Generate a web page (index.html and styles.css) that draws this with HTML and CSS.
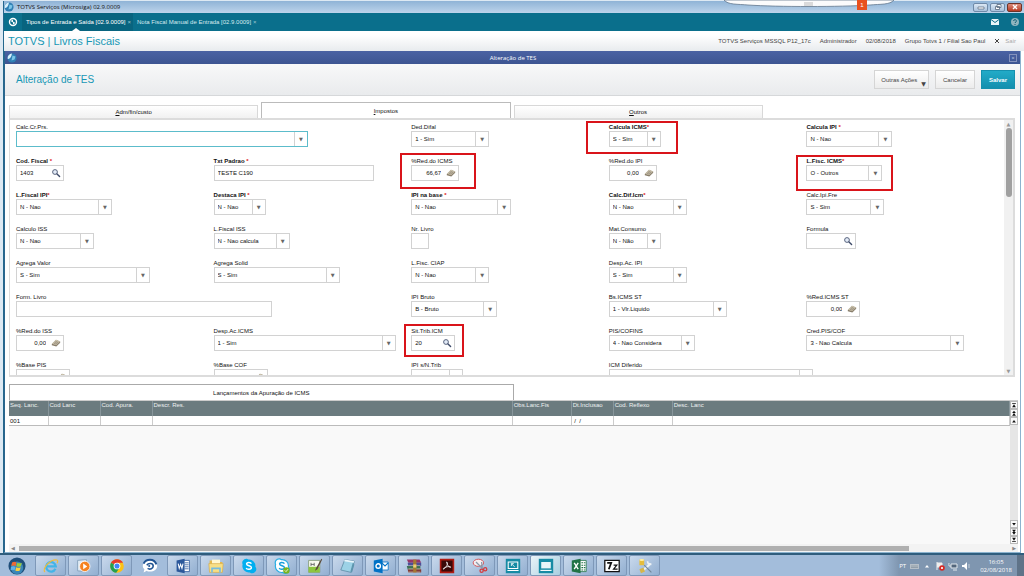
FILE: index.html
```html
<!DOCTYPE html>
<html lang="pt-BR">
<head>
    <meta charset="UTF-8">
    <meta name="viewport" content="width=device-width, initial-scale=1.0">
    <title>TOTVS Serviços (Microsiga) 02.9.0009</title>
    <link rel="stylesheet" href="styles.css">
</head>
<body>
    <svg class="symbols" width="0" height="0">
        <symbol id="search" viewBox="0 0 10 10">
            <circle cx="4" cy="4" r="2.4" fill="#e4ecf8" stroke="#4a5672" stroke-width=".9"/>
            <path d="M6 6l2.600 2.600" stroke="#3d4a68" stroke-width="1.400" stroke-linecap="round"/>
        </symbol>
        <symbol id="calc" viewBox="0 0 12 10">
            <path d="M1 6.200L6 1.200l5 1.900v1.700L6.400 9.200 1 7.600z" fill="#857b68"/>
            <path d="M1 6L6 1.200l5 1.900L6.200 7.600z" fill="#cfc6b0"/>
            <path d="M5 3l4 1.400M4 4.200l4 1.400M3 5.200l3.600 1.300M7.500 2.600L4 6.200M9 3.200L5.600 6.800" stroke="#857c6c" stroke-width=".5"/>
        </symbol>
        <symbol id="orb" viewBox="0 0 10 10">
            <circle cx="5" cy="5" r="4.600" fill="#2f7fb4"/>
            <path d="M5 .6A4.400 4.400 0 0 0 .8 6C2.500 6.500 4.500 4.500 5 .6z" fill="#d9f0fa"/>
            <path d="M5.500 2.500l3 1-1 3-3 1z" fill="#7cc6e8"/>
        </symbol>
    </svg>

    <div class="window">
        <header class="titlebar">
            <svg class="logo"><use href="#orb"/></svg>
            <span class="caption">TOTVS Serviços (Microsiga) 02.9.0009</span>
            <div class="window-buttons">
                <button aria-label="Minimizar"><svg viewBox="0 0 8 6"><path d="M1 3h6v2H1z" fill="#fff" stroke="#56677c" stroke-width=".7"/></svg></button>
                <button aria-label="Restaurar"><svg viewBox="0 0 8 6"><path d="M3 .5h4v3H3zM1.500 2.500h4v3h-4z" fill="#fff" stroke="#56677c" stroke-width=".8"/></svg></button>
                <button class="close" aria-label="Fechar"><svg viewBox="0 0 8 6"><path d="M2 1l4 4M6 1L2 5" stroke="#fff" stroke-width="1.400"/></svg></button>
            </div>
            <div class="remote-bar">
                <svg viewBox="0 0 170 8" preserveAspectRatio="none"><path d="M0 0h170c-4 5-14 4-24 5-30 2-92 2-122 0C14 4 4 5 0 0z" fill="#fbfbfc" stroke="#64788e" stroke-width=".8"/><path d="M80 3h9M80 5h9" stroke="#aaa" stroke-width=".8"/></svg>
                <span class="badge">1</span>
            </div>
        </header>

        <nav class="app-tabs">
            <button class="refresh" aria-label="Atualizar"><svg viewBox="0 0 10 10"><circle cx="5" cy="5" r="3.500" fill="none" stroke="#fff" stroke-width="1.400"/><path d="M2.500 4L5 2.500v3zM7.500 6L5 7.500v-3z" fill="#fff"/></svg></button>
            <a href="#" class="app-tab current">Tipos de Entrada e Saída [02.9.0009] <span>×</span></a>
            <a href="#" class="app-tab">Nota Fiscal Manual de Entrada [02.9.0009] <span>×</span></a>
            <div class="app-icons">
                <button aria-label="Mensagens"><svg viewBox="0 0 10 10"><path d="M1 2h8v6H1z" fill="#e8f4f7"/><path d="M1 2.500l4 3 4-3" fill="none" stroke="#0a6d8a"/></svg></button>
                <button aria-label="Ajuda"><svg viewBox="0 0 10 10"><circle cx="5" cy="5" r="4" fill="#8fb4be"/><path d="M3.700 4a1.300 1.300 0 1 1 2 1L5 6M5 7v1" fill="none" stroke="#0a5d75"/></svg></button>
            </div>
        </nav>

        <div class="module-bar">
            <h1>TOTVS | Livros Fiscais</h1>
            <div class="session">
                <span>TOTVS Serviços MSSQL P12_17c</span>
                <span>Administrador</span>
                <span>02/08/2018</span>
                <span>Grupo Totvs 1 / Filial Sao Paul</span>
                <button class="exit"><svg viewBox="0 0 6 6"><path d="M1 1l4 4M5 1L1 5" stroke="#444"/></svg>Sair</button>
            </div>
        </div>

        <main class="dialog">
            <div class="dialog-title">
                <svg class="logo"><use href="#orb"/></svg>
                <span>Alteração de TES</span>
                <button aria-label="Fechar janela">×</button>
            </div>
            <div class="dialog-head">
                <h2>Alteração de TES</h2>
                <button class="btn menu">Outras Ações</button>
                <button class="btn">Cancelar</button>
                <button class="btn primary">Salvar</button>
            </div>

            <div class="content">
                <div class="tabs">
                    <button class="tab"><u>A</u>dm/fin/custo</button>
                    <button class="tab active"><u>I</u>mpostos</button>
                    <button class="tab"><u>O</u>utros</button>
                </div>

                <section class="panel">
                    <form class="fields">
                        <div class="field span2"><label for="crprs">Calc.Cr.Prs.</label><div class="combo w-292 focus"><select id="crprs"><option></option></select></div></div>
                        <div class="field"><label for="difal">Ded.Difal</label><div class="combo w-78"><select id="difal"><option>1 - Sim</option></select></div></div>
                        <div class="field"><label for="cicms" class="req">Calcula ICMS<i>*</i></label><div class="combo w-52"><select id="cicms"><option>S - Sim</option></select></div><span class="mark mark-cicms"></span></div>
                        <div class="field"><label for="cipi" class="req">Calcula IPI <i>*</i></label><div class="combo w-86"><select id="cipi"><option>N - Nao</option></select></div></div>

                        <div class="field"><label for="cfis" class="req">Cod. Fiscal <i>*</i></label><div class="box w-48"><input id="cfis" value="1403"><svg><use href="#search"/></svg></div></div>
                        <div class="field"><label for="txt" class="req">Txt Padrao <i>*</i></label><div class="box w-160"><input id="txt" value="TESTE C190"></div></div>
                        <div class="field"><label for="ricms">%Red.do ICMS</label><div class="box num w-48"><input id="ricms" value="66,67"><svg><use href="#calc"/></svg></div><span class="mark mark-ricms"></span></div>
                        <div class="field"><label for="ripi">%Red.do IPI</label><div class="box num w-48"><input id="ripi" value="0,00"><svg><use href="#calc"/></svg></div></div>
                        <div class="field"><label for="lficms" class="req">L.Fisc. ICMS<i>*</i></label><div class="combo w-76"><select id="lficms"><option>O - Outros</option></select></div><span class="mark mark-lficms"></span></div>

                        <div class="field"><label for="lfipi" class="req">L.Fiscal IPI<i>*</i></label><div class="combo w-96"><select id="lfipi"><option>N - Nao</option></select></div></div>
                        <div class="field"><label for="dipi" class="req">Destaca IPI <i>*</i></label><div class="combo w-52"><select id="dipi"><option>N - Nao</option></select></div></div>
                        <div class="field"><label for="ipib" class="req">IPI na base <i>*</i></label><div class="combo w-100"><select id="ipib"><option>N - Nao</option></select></div></div>
                        <div class="field"><label for="cdif" class="req">Calc.Dif.Icm<i>*</i></label><div class="combo w-78"><select id="cdif"><option>N - Nao</option></select></div></div>
                        <div class="field"><label for="ipif">Calc.Ipi.Fre</label><div class="combo w-78"><select id="ipif"><option>S - Sim</option></select></div></div>

                        <div class="field"><label for="ciss">Calculo ISS</label><div class="combo w-78"><select id="ciss"><option>N - Nao</option></select></div></div>
                        <div class="field"><label for="lfiss">L.Fiscal ISS</label><div class="combo w-76"><select id="lfiss"><option>N - Nao calcula</option></select></div></div>
                        <div class="field"><label for="nrl">Nr. Livro</label><div class="box w-18"><input id="nrl"></div></div>
                        <div class="field"><label for="mat">Mat.Consumo</label><div class="combo w-52"><select id="mat"><option>N - Não</option></select></div></div>
                        <div class="field"><label for="form">Formula</label><div class="box w-50"><input id="form"><svg><use href="#search"/></svg></div></div>

                        <div class="field"><label for="agv">Agrega Valor</label><div class="combo w-134"><select id="agv"><option>S - Sim</option></select></div></div>
                        <div class="field"><label for="ags">Agrega Solid</label><div class="combo w-126"><select id="ags"><option>S - Sim</option></select></div></div>
                        <div class="field"><label for="ciap">L.Fisc. CIAP</label><div class="combo w-78"><select id="ciap"><option>N - Nao</option></select></div></div>
                        <div class="field span2"><label for="daipi">Desp.Ac. IPI</label><div class="combo w-78"><select id="daipi"><option>S - Sim</option></select></div></div>

                        <div class="field span2"><label for="fliv">Form. Livro</label><div class="box w-256"><input id="fliv"></div></div>
                        <div class="field"><label for="bruto">IPI Bruto</label><div class="combo w-86"><select id="bruto"><option>B - Bruto</option></select></div></div>
                        <div class="field"><label for="bsst">Bs.ICMS ST</label><div class="combo w-118"><select id="bsst"><option>1 - Vlr.Liquido</option></select></div></div>
                        <div class="field"><label for="rst">%Red.ICMS ST</label><div class="box num w-54"><input id="rst" value="0,00"><svg><use href="#calc"/></svg></div></div>

                        <div class="field"><label for="riss">%Red.do ISS</label><div class="box num w-48"><input id="riss" value="0,00"><svg><use href="#calc"/></svg></div></div>
                        <div class="field"><label for="daicms">Desp.Ac.ICMS</label><div class="combo w-182"><select id="daicms"><option>1 - Sim</option></select></div></div>
                        <div class="field"><label for="sit">Sit.Trib.ICM</label><div class="box w-44"><input id="sit" value="20"><svg><use href="#search"/></svg></div><span class="mark mark-sit"></span></div>
                        <div class="field"><label for="pis">PIS/COFINS</label><div class="combo w-86"><select id="pis"><option>4 - Nao Considera</option></select></div></div>
                        <div class="field"><label for="cred">Cred.PIS/COF</label><div class="combo w-158"><select id="cred"><option>3 - Nao Calcula</option></select></div></div>

                        <div class="field"><label for="bpis">%Base PIS</label><div class="box num w-54"><input id="bpis"><svg><use href="#calc"/></svg></div></div>
                        <div class="field"><label for="bcof">%Base COF</label><div class="box num w-54"><input id="bcof"><svg><use href="#calc"/></svg></div></div>
                        <div class="field"><label for="ntrib">IPI s/N.Trib</label><div class="combo w-52"><select id="ntrib"><option></option></select></div></div>
                        <div class="field span2"><label for="dife">ICM Diferido</label><div class="combo w-204"><select id="dife"><option></option></select></div></div>
                    </form>
                    <div class="scroll"><span>▲</span><div class="thumb"></div><span>▼</span></div>
                </section>

                <section class="ledger">
                    <button class="ledger-tab">Lançamentos da Apuração de ICMS</button>
                    <div class="ledger-body">
                        <div class="ledger-rows">
                            <table>
                                <colgroup>
                                    <col class="c-seq"><col class="c-cod"><col class="c-cod"><col class="c-descr"><col class="c-mid"><col class="c-date"><col class="c-mid"><col>
                                </colgroup>
                                <thead>
                                    <tr><th>Seq. Lanc.</th><th>Cod Lanc</th><th>Cod. Apura.</th><th>Descr. Res.</th><th>Obs.Lanc.Fis</th><th>Dt.Inclusao</th><th>Cod. Reflexo</th><th>Desc. Lanc</th></tr>
                                </thead>
                                <tbody>
                                    <tr><td>001</td><td></td><td></td><td></td><td></td><td>&nbsp;/ &nbsp;/</td><td></td><td></td></tr>
                                </tbody>
                            </table>
                        </div>
                        <div class="pager">
                            <button aria-label="Primeiro"><svg viewBox="0 0 8 8"><path d="M1.500 1.500h5v1h-5zM1.500 7L4 3l2.500 4z" fill="#111"/></svg></button>
                            <button aria-label="Página acima"><svg viewBox="0 0 8 8"><path d="M1.500 4L4 1l2.500 3zM1.500 7.500L4 4l2.500 3.500z" fill="#111"/></svg></button>
                            <button aria-label="Acima"><svg viewBox="0 0 8 8"><path d="M1.500 6L4 2.500 6.500 6z" fill="#111"/></svg></button>
                            <div class="track"></div>
                            <button aria-label="Abaixo"><svg viewBox="0 0 8 8"><path d="M1.500 2.500L4 6l2.500-3.500z" fill="#111"/></svg></button>
                            <button aria-label="Página abaixo"><svg viewBox="0 0 8 8"><path d="M1.500 1L4 4.500 6.500 1zM1.500 4L4 7.500 6.500 4z" fill="#111"/></svg></button>
                            <button aria-label="Último"><svg viewBox="0 0 8 8"><path d="M1.500 5.500h5v1h-5zM1.500 1L4 5l2.500-4z" fill="#111"/></svg></button>
                        </div>
                    </div>
                    <div class="hscroll"><span>◀</span><div class="rail"><div class="thumb"></div></div><span>▶</span></div>
                </section>
            </div>
        </main>
    </div>

    <footer class="taskbar">
        <button class="start" aria-label="Iniciar"><svg viewBox="0 0 20 20"><circle cx="10" cy="10" r="9.500" fill="#1f4e79"/><circle cx="10" cy="12" r="7" fill="#3a87b8"/><path d="M4.500 6c2-1 3.500-.8 5 0L8.500 10c-1.500-.9-3-.9-4.800-.1z" fill="#ee6a33"/><path d="M10.300 6.300c1.700.9 3.300.8 5 0l-1 4c-1.600.8-3.300.8-5 0z" fill="#9ccb3c"/><path d="M3.500 11c1.700-.9 3.300-.8 4.800 0l-1 3.700c-1.500-.9-3-.8-4.600 0z" fill="#5fb2ea"/><path d="M9.100 11.300c1.600.9 3.300.8 5 0l-1 3.800c-1.700.9-3.400.7-5-.1z" fill="#fbd03f"/></svg></button>
        <button class="app" aria-label="Internet Explorer"><svg viewBox="0 0 20 20"><path d="M15.500 13.500A6 6 0 1 1 16 10.500H5" fill="none" stroke="#43b5e8" stroke-width="2.800"/><path d="M2.500 17.500C-2 14 9 1 17.500 2.500c1.500.5 1 2.500 0 4" fill="none" stroke="#f0bc3c" stroke-width="1.400"/></svg></button>
        <button class="app" aria-label="Media Player"><svg viewBox="0 0 20 20"><path d="M2 3l11-1v15L2 16z" fill="#dfeaf4" stroke="#7e9ab5"/><circle cx="11" cy="10.500" r="6.500" fill="#f58220" stroke="#fff"/><path d="M9 7l5 3.500L9 14z" fill="#fff"/></svg></button>
        <button class="app" aria-label="Chrome"><svg viewBox="0 0 20 20"><circle cx="10" cy="10" r="8.500" fill="#fbc116"/><path d="M10 10L2.500 6A8.500 8.500 0 0 1 17.500 6H10z" fill="#e33b2e"/><path d="M2.500 6L10 10l2 4-3 4.500A8.500 8.500 0 0 1 2.500 6z" fill="#23a050"/><circle cx="10" cy="10" r="4.200" fill="#fff"/><circle cx="10" cy="10" r="3.200" fill="#4285f4"/></svg></button>
        <button class="app plain" aria-label="Mensageiro"><svg viewBox="0 0 20 20"><path d="M10 3c5 0 9 3 9 7s-4 7-9 7c-2 0-3 0-4-1l-4 2 1-4c-1-1-2-2-2-4 0-4 4-7 9-7z" fill="#fff"/><path d="M2 7c3-6 13-7 16 1" fill="none" stroke="#205493" stroke-width="2.400"/><path d="M6 9c2-3 8-3 8 1 0 3-4 5-7 3" fill="none" stroke="#205493" stroke-width="2"/><circle cx="9" cy="10" r="1.300" fill="#205493"/></svg></button>
        <button class="app" aria-label="Word"><svg viewBox="0 0 20 20"><path d="M9 3h9v14H9z" fill="#fff" stroke="#2b579a"/><path d="M12 6h5M12 8.500h5M12 11h5M12 13.500h5" stroke="#2b579a"/><path d="M2 3l10-2v18L2 17z" fill="#2b579a"/><path d="M4 7l1.300 6L7 8l1.700 5L10 7" fill="none" stroke="#fff" stroke-width="1.300"/></svg></button>
        <button class="app" aria-label="Explorer"><svg viewBox="0 0 20 20"><path d="M2 3h6l1 2h9v12H2z" fill="#e6b94c"/><path d="M5 2h10v9H5z" fill="#fff7d0"/><path d="M1 7h18l-1 11H2z" fill="#f7df86" stroke="#d2a440" stroke-width=".7"/><path d="M5 18v-5h10v5" fill="none" stroke="#75bce0" stroke-width="2"/></svg></button>
        <button class="app" aria-label="Skype"><svg viewBox="0 0 20 20"><path d="M7 1a5 5 0 0 0-5 7 8 8 0 0 0 9 10 5 5 0 0 0 7-7A8 8 0 0 0 9 2a5 5 0 0 0-2-1z" fill="#00aff0"/><path d="M13 7c-1-2-6-2-6 .5S13 9.500 13 12s-5.500 3-6.500.5" fill="none" stroke="#fff" stroke-width="1.800"/></svg></button>
        <button class="app" aria-label="Skype Empresas"><svg viewBox="0 0 20 20"><path d="M7 1a5 5 0 0 0-5 7 8 8 0 0 0 9 10 5 5 0 0 0 7-7A8 8 0 0 0 9 2a5 5 0 0 0-2-1z" fill="#fff" stroke="#28aee4" stroke-width="1.500"/><path d="M13 7c-1-2-6-2-6 .5S13 9.500 13 12s-5.500 3-6.500.5" fill="none" stroke="#169fdb" stroke-width="1.800"/><circle cx="15.500" cy="15.500" r="4" fill="#7ab41d"/><path d="M13.500 15.500l1.500 1.500 2.500-3" fill="none" stroke="#fff"/></svg></button>
        <button class="app" aria-label="Notepad++"><svg viewBox="0 0 20 20"><path d="M2 3h14v15H2z" fill="#f8faee" stroke="#7e9670"/><path d="M2 11h14v7H2z" fill="#8dc63f"/><path d="M5 6v4M5 8h4M9 6v4" stroke="#555"/><path d="M18 1l-7 12-1 3 3-2 6-12z" fill="#5b4a3a"/></svg></button>
        <button class="app" aria-label="Bloco de notas"><svg viewBox="0 0 20 20"><path d="M6 2l12 2-4 14L1 15z" fill="#9cd2e6" stroke="#5d8ca5"/><path d="M6 2l12 2-1 2L5 4z" fill="#e8f5fa"/><path d="M16 6l2 2-3 10-2-1z" fill="#5d95ad"/></svg></button>
        <button class="app" aria-label="Outlook"><svg viewBox="0 0 20 20"><path d="M10 5h9v10h-9z" fill="#fff" stroke="#0072c6"/><path d="M11 6l4 4 4-4" fill="none" stroke="#0072c6" stroke-width="1.400"/><path d="M1 3l11-2v18L1 17z" fill="#0072c6"/><circle cx="6.500" cy="10" r="2.800" fill="none" stroke="#fff" stroke-width="1.700"/></svg></button>
        <button class="app" aria-label="WinRAR"><svg viewBox="0 0 20 20"><path d="M1 2h16l2 4H3z" fill="#963768"/><path d="M2 6h17v4H3z" fill="#4e4f98"/><path d="M1 10h17v4H2z" fill="#3d6f55"/><path d="M2 14h17v4H3z" fill="#803a38"/><path d="M3 9.500h15M3 13.500h15M3 17.500h15" stroke="#e4d8b8" stroke-width=".7"/><path d="M9 2h4v16H9z" fill="#a47832"/><path d="M9 8h4v4H9z" fill="#e9cf75"/></svg></button>
        <button class="app" aria-label="Adobe Reader"><svg viewBox="0 0 20 20"><path d="M2 2h16v16H2z" fill="#3a0a09" stroke="#b01c13" stroke-width="2"/><path d="M9.500 5c3 1-1 8-4 9-1-2 6-4 9-3 1 2-4 0-5-6z" fill="none" stroke="#fff"/></svg></button>
        <button class="app" aria-label="Captura"><svg viewBox="0 0 20 20"><ellipse cx="8" cy="6" rx="6.500" ry="4.500" fill="#f5eff0" stroke="#d25459" stroke-width="1.200"/><path d="M5 5l9 9M12 5l1 9" stroke="#899aac" stroke-width="1.600"/><circle cx="12" cy="16" r="2" fill="none" stroke="#d23d40" stroke-width="1.600"/><circle cx="16.500" cy="14" r="2" fill="none" stroke="#d23d40" stroke-width="1.600"/></svg></button>
        <button class="app" aria-label="Área remota"><svg viewBox="0 0 20 20"><path d="M1 1h18v18H1z" fill="#168ba4"/><path d="M4 5h12v8H4zM3 15.500h14" fill="none" stroke="#fff" stroke-width="1.300"/><path d="M8 7l4 4M8 7v3M8 7h3" stroke="#fff"/></svg></button>
        <button class="app on" aria-label="SmartClient"><svg viewBox="0 0 20 20"><path d="M1 1h18v18H1z" fill="#168ba4"/><path d="M4 5h12v8H4z" fill="#e8f5f8"/><path d="M3 15.500h14" stroke="#fff" stroke-width="1.400"/></svg></button>
        <button class="app" aria-label="Excel"><svg viewBox="0 0 20 20"><path d="M10 3h9v14h-9z" fill="#fff" stroke="#217346"/><path d="M13 6h2M16 6h2M13 9h2M16 9h2M13 12h2M16 12h2M13 15h2M16 15h2" stroke="#217346" stroke-width="1.400"/><path d="M1 3l11-2v18L1 17z" fill="#217346"/><path d="M4 6l5 8M9 6l-5 8" stroke="#fff" stroke-width="1.700"/></svg></button>
        <button class="app" aria-label="7-Zip"><svg viewBox="0 0 20 20"><path d="M1 3h18v14H1z" fill="#fff" stroke="#111" stroke-width="1.600"/><path d="M4 6h5l-3 8" fill="none" stroke="#111" stroke-width="2.200"/><path d="M12 9h4l-4 5h5" fill="none" stroke="#111" stroke-width="1.500"/></svg></button>
        <button class="app" aria-label="Ferramentas"><svg viewBox="0 0 20 20"><path d="M3 2h6v7H3z" fill="#e6bd3c"/><ellipse cx="6" cy="2.500" rx="3" ry="1.300" fill="#fff1a5"/><path d="M17 7l-9 8" stroke="#edf2f5" stroke-width="2.600"/><path d="M13 4l1 3 4 1" fill="none" stroke="#edf2f5" stroke-width="2"/><path d="M9 9l9 9" stroke="#71879a" stroke-width="1.400"/><path d="M3 14l5-2 2 5-5 2z" fill="#d6b64b"/></svg></button>
        <div class="tray">
            <span>PT</span>
            <svg viewBox="0 0 10 10"><path d="M1 3h9v5H1z" fill="#b6bfc8"/><path d="M2 5h7M2 6.500h7" stroke="#7c8996" stroke-width=".6"/></svg>
            <svg viewBox="0 0 10 10"><path d="M3 6.500L5 4l2 2.500z" fill="#fff"/></svg>
            <svg viewBox="0 0 10 10"><path d="M2 1v8M2 2h5v4H2" fill="#eee" stroke="#eee"/><circle cx="7" cy="7" r="2.800" fill="#d72a25"/><path d="M6 6l2 2M8 6L6 8" stroke="#fff" stroke-width=".8"/></svg>
            <svg viewBox="0 0 10 10"><path d="M3 3h6v4H3zM5 9h4M1 2v3h2" fill="#52667c" stroke="#e2e8ee"/></svg>
            <svg viewBox="0 0 10 10"><path d="M1 4h2l3-3v8L3 6H1z" fill="#fff"/><path d="M8 3v4" stroke="#d5dde5" stroke-width=".8"/></svg>
            <div class="clock">16:05<br>02/08/2018</div>
        </div>
        <button class="show-desktop" aria-label="Mostrar área de trabalho"></button>
    </footer>
</body>
</html>
```
FILE: styles.css
```css
* {
    box-sizing: border-box;
}

body {
    margin: 0;
    height: 100vh;
    display: flex;
    flex-direction: column;
    overflow: hidden;
    font-family: "Liberation Sans", Arial, sans-serif;
    font-size: 6px;
    line-height: 8px;
    color: #111;
    background: #dde9f3;
}

button, input, select {
    font: inherit;
    color: inherit;
    padding: 0;
    margin: 0;
    border: none;
    border-radius: 0;
    background: none;
    outline: none;
}

button {
    display: flex;
    align-items: center;
    justify-content: center;
    cursor: pointer;
}

h1, h2 {
    margin: 0;
    font-weight: normal;
    color: #1797b5;
}

a {
    color: inherit;
    text-decoration: none;
}

.symbols {
    position: absolute;
}

.logo {
    width: 10px;
    height: 10px;
}

/* main window */
.window {
    flex: 1;
    min-height: 0;
    display: flex;
    flex-direction: column;
    margin: 1px 0 0 3px;
    border-left: 1px solid #24678d;
    background: #fff;
}

.titlebar {
    position: relative;
    flex: none;
    height: 12px;
    display: flex;
    align-items: center;
    gap: 3px;
    background: linear-gradient(#8fb3d6, #bdd4eb);
}

.caption {
    flex: 1;
    font-family: "Open Sans", sans-serif;
}

.window-buttons {
    display: flex;
    gap: 2px;
    padding-right: 2px;
}

.window-buttons button {
    width: 15px;
    height: 9px;
    border: 1px solid #6f8aa8;
    border-radius: 2px;
    background: linear-gradient(#dce8f4, #a9c2dc);
}

.window-buttons svg {
    width: 8px;
    height: 6px;
}

.window-buttons .close {
    background: linear-gradient(#dc8d7c, #b93a22);
    border-color: #6d3328;
}

.remote-bar {
    position: absolute;
    top: -1px;
    right: 130px;
    width: 170px;
    height: 8px;
}

.remote-bar svg {
    display: block;
    width: 100%;
    height: 8px;
}

.badge {
    position: absolute;
    top: 0;
    right: 27px;
    width: 10px;
    line-height: 10px;
    text-align: center;
    color: #fff;
    background: #e8501e;
}

.app-tabs {
    flex: none;
    height: 18px;
    display: flex;
    align-items: stretch;
    color: #d5e9ee;
    background: #0a6f8c;
}

.refresh {
    width: 18px;
}

.refresh svg {
    width: 10px;
    height: 10px;
}

.app-tab {
    position: relative;
    display: flex;
    align-items: center;
    gap: 2px;
    padding: 0 2px 0 4px;
}

.app-tab span {
    color: #9cc6d1;
}

.app-tab.current {
    color: #fff;
    background: #08647f;
}

.app-tab.current::after {
    content: "";
    position: absolute;
    bottom: 0;
    left: 45%;
    border: 4px solid transparent;
    border-top: none;
    border-bottom: 3px solid #fff;
}

.app-icons {
    margin-left: auto;
    display: flex;
    gap: 10px;
    padding-right: 4px;
}

.app-icons svg {
    width: 10px;
    height: 10px;
}

.module-bar {
    flex: none;
    height: 20px;
    display: flex;
    align-items: center;
    justify-content: space-between;
    padding: 0 8px 0 4px;
    background: linear-gradient(#fff 20%, #e8ebee);
}

.module-bar h1 {
    font-size: 11px;
}

.session {
    display: flex;
    gap: 9px;
    color: #444;
}

.exit {
    gap: 5px;
    color: #aaa;
}

.exit svg {
    width: 6px;
    height: 6px;
}

/* dialog */
.dialog {
    flex: 1;
    min-height: 0;
    display: flex;
    flex-direction: column;
    margin-right: 3px;
    border: 1px solid #8bb3cf;
    border-left-color: #2b668f;
    border-top: none;
}

.dialog-title {
    flex: none;
    height: 13px;
    display: flex;
    align-items: center;
    justify-content: space-between;
    padding: 0 3px 0 2px;
    font-family: "Open Sans", sans-serif;
    color: #fff;
    background: linear-gradient(#4a62a3, #3d5592);
}

.dialog-title button {
    width: 8px;
    height: 8px;
    color: #c3cbe2;
    border: 1px solid #8492bd;
}

.dialog-head {
    flex: none;
    height: 32px;
    display: flex;
    align-items: center;
    gap: 6px;
    padding: 0 5px 0 11px;
    border-bottom: 1px solid #d6d8da;
    background: linear-gradient(#f8f8f9, #e9ebed);
}

.dialog-head h2 {
    flex: 1;
    font-size: 10px;
}

.btn {
    height: 19px;
    padding: 0 7px;
    color: #444;
    border: 1px solid #d5d5d5;
    background: linear-gradient(#fff, #ececec);
}

.btn.menu {
    gap: 4px;
    padding: 0 2px 0 6px;
}

.btn.menu::after {
    content: "▼";
    align-self: flex-end;
    font-family: "DejaVu Sans", sans-serif;
    font-size: 6px;
}

.btn.primary {
    color: #fff;
    font-weight: bold;
    border-color: #1590ae;
    background: linear-gradient(#22abc8, #138fae);
}

.content {
    flex: 1;
    min-height: 0;
    display: flex;
    flex-direction: column;
    padding: 6px 2px 0 4px;
}

.tabs {
    flex: none;
    display: grid;
    grid-template-columns: repeat(4, 1fr);
    align-items: end;
    gap: 3px;
    margin-right: 3px;
}

.tab {
    height: 13px;
    border: 1px solid #d8d8d8;
    border-bottom: none;
    background: linear-gradient(#fff, #f1f1f1);
}

.tab.active {
    height: 16px;
    border-color: #bbb;
    background: #fff;
}

.panel {
    flex: 259;
    min-height: 0;
    display: flex;
    margin-right: 3px;
    border: 2px solid #dcdcdc;
    border-left-width: 1px;
    overflow: hidden;
}

.fields {
    flex: 1;
    display: grid;
    grid-template-columns: repeat(5, 1fr);
    grid-auto-rows: 24px;
    row-gap: 10px;
    padding: 3px 0 0 6px;
}

.field {
    position: relative;
    min-width: 0;
}

.span2 {
    grid-column: span 2;
}

.field label {
    display: block;
}

.req {
    font-weight: bold;
}

.req i {
    font-style: normal;
    color: #e02020;
}

.combo, .box {
    display: flex;
    align-items: center;
    height: 16px;
    border: 1px solid #d2d2d2;
    background: #fff;
}

.combo select {
    flex: 1;
    min-width: 0;
    height: 14px;
    padding-left: 3px;
    appearance: none;
}

.combo::after {
    content: "▼";
    width: 12px;
    line-height: 14px;
    text-align: center;
    font-family: "DejaVu Sans", sans-serif;
    font-size: 5px;
    color: #666;
    border-left: 1px solid #d2d2d2;
}

.combo.focus {
    border-color: #5cbccb;
}

.box input {
    flex: 1;
    width: 0;
    height: 14px;
    padding-left: 3px;
}

.box svg {
    flex: none;
    width: 10px;
    height: 10px;
    margin: 0 2px;
}

.box.num input {
    text-align: right;
    padding-right: 3px;
}

.w-18 { width: 18px; }
.w-44 { width: 44px; }
.w-48 { width: 48px; }
.w-50 { width: 50px; }
.w-52 { width: 52px; }
.w-54 { width: 54px; }
.w-76 { width: 76px; }
.w-78 { width: 78px; }
.w-86 { width: 86px; }
.w-96 { width: 96px; }
.w-100 { width: 100px; }
.w-118 { width: 118px; }
.w-126 { width: 126px; }
.w-134 { width: 134px; }
.w-158 { width: 158px; }
.w-160 { width: 160px; }
.w-182 { width: 182px; }
.w-204 { width: 204px; }
.w-256 { width: 256px; }
.w-292 { width: 292px; }

/* red highlight drawn over a field */
.mark {
    position: absolute;
    border: 2px solid #d9141a;
    pointer-events: none;
}

.mark-cicms {
    top: -2px;
    left: -23px;
    width: 92px;
    height: 33px;
}

.mark-ricms {
    top: -4px;
    left: -11px;
    width: 76px;
    height: 36px;
}

.mark-lficms {
    top: -2px;
    left: -10px;
    width: 97px;
    height: 36px;
}

.mark-sit {
    top: -3px;
    left: -7px;
    width: 60px;
    height: 33px;
}

.scroll {
    width: 9px;
    display: flex;
    flex-direction: column;
    align-items: center;
    font-family: "DejaVu Sans", sans-serif;
    font-size: 5px;
    color: #999;
    background: #f1f1f1;
}

.scroll .thumb {
    width: 6px;
    height: 27%;
    margin-bottom: auto;
    border-radius: 3px;
    background: #a0a0a0;
}

/* lower grid */
.ledger {
    flex: 170;
    min-height: 0;
    display: flex;
    flex-direction: column;
    padding-top: 7px;
}

.ledger-tab {
    flex: none;
    width: 50%;
    height: 16px;
    border: 1px solid #aaa;
    border-bottom: none;
    background: #fff;
}

.ledger-body {
    flex: 1;
    min-height: 0;
    display: flex;
    border-top: 1px solid #ccc;
}

.ledger-rows {
    flex: 1;
    background: #f9f9f9;
}

table {
    width: 100%;
    table-layout: fixed;
    border-collapse: collapse;
}

.c-seq { width: 39px; }
.c-cod { width: 52px; }
.c-descr { width: 36%; }
.c-mid { width: 59px; }
.c-date { width: 42px; }

th {
    height: 15px;
    padding: 0 1px;
    font-weight: normal;
    text-align: left;
    vertical-align: top;
    color: #eef1f1;
    border-right: 1px solid #87959a;
    background: #6b7b7f;
}

td {
    height: 9px;
    padding: 0 1px;
    border-right: 1px solid #ccc;
    border-bottom: 1px solid #bbb;
    background: #fff;
}

.pager {
    width: 8px;
    display: flex;
    flex-direction: column;
    background: #e6e6e6;
}

.pager button {
    height: 8px;
    border: 1px solid #bbb;
    background: #fafafa;
}

.pager svg {
    flex: none;
    width: 6px;
    height: 6px;
}

.pager .track {
    flex: 1;
}

.hscroll {
    flex: none;
    height: 8px;
    display: flex;
    align-items: center;
    gap: 4px;
    padding: 0 2px;
    font-family: "DejaVu Sans", sans-serif;
    font-size: 5px;
    color: #888;
    background: #f3f3f3;
}

.hscroll .rail {
    flex: 1;
}

.hscroll .thumb {
    width: 90%;
    height: 5px;
    background: #b0b0b0;
}

/* windows taskbar */
.taskbar {
    flex: none;
    height: 23px;
    display: flex;
    align-items: center;
    gap: 2px;
    border-top: 2px solid #2f5d7d;
    background: #a3bddb;
}

.start {
    width: 33px;
}

.taskbar svg {
    width: 18px;
    height: 18px;
}

.app {
    width: 31px;
    height: 21px;
    border: 1px solid #7e98b8;
    border-radius: 2px;
    background: linear-gradient(135deg, #c9d9ec, #92afd1);
}

.app svg {
    width: 16px;
    height: 16px;
}

.app.plain {
    border-color: transparent;
    background: none;
}

.app.on {
    background: linear-gradient(135deg, #e9f4f8, #a9cfe0);
}

.tray {
    align-self: stretch;
    margin-left: auto;
    display: flex;
    align-items: center;
    gap: 3px;
    padding-left: 20px;
    font-family: "Open Sans", sans-serif;
    color: #fff;
    background: linear-gradient(90deg, #a3bddb, #7f96b0 20px);
}

.taskbar .tray svg {
    width: 10px;
    height: 10px;
}

.clock {
    padding: 0 5px 0 6px;
    text-align: center;
}

.show-desktop {
    align-self: stretch;
    width: 7px;
    margin-left: -2px;
    background: #5f7388;
}
```
